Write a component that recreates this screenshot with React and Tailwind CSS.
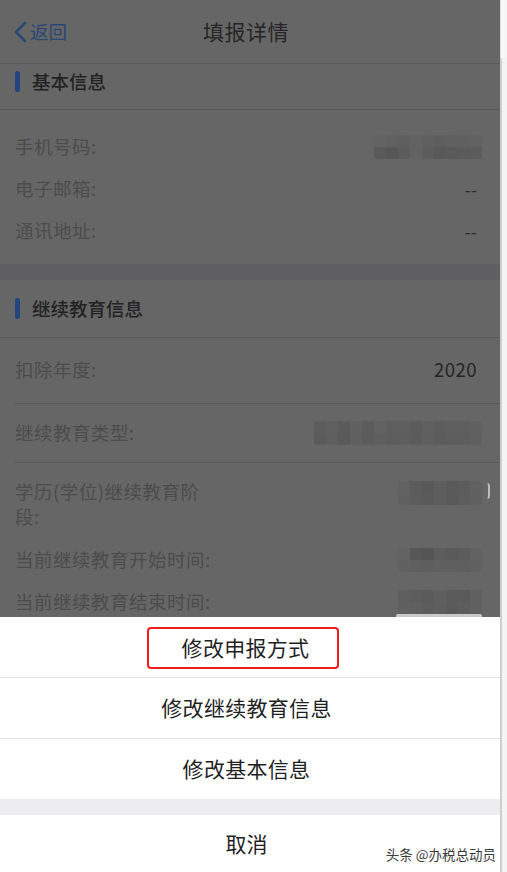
import React from "react";

const FONT = { fontFamily: '"Noto Sans CJK SC", "Noto Sans", sans-serif' };

function Blur({ w, h, cols, rows, tones }) {
  const cells = [];
  for (let r = 0; r < rows; r++) {
    for (let c = 0; c < cols; c++) {
      cells.push(
        <div key={r + "-" + c} style={{ background: tones[(r * cols + c) % tones.length] }} />
      );
    }
  }
  return (
    <div
      className="grid rounded-[3px] overflow-hidden"
      style={{ width: w, height: h, gridTemplateColumns: `repeat(${cols}, 1fr)`, gridTemplateRows: `repeat(${rows}, 1fr)` }}
    >
      {cells}
    </div>
  );
}

function Row({ label, children, className = "", inset = true }) {
  return (
    <div className={"shrink-0 flex items-center justify-between pr-[23px] " + (inset ? "pl-[15px] " : "") + className}>
      <span className="text-[18.5px] text-[#4c4c4c] tracking-[0.5px]">{label}</span>
      {children}
    </div>
  );
}

function SectionHeader({ title, className = "" }) {
  return (
    <div className={"shrink-0 flex items-center gap-[12px] pl-[15px] border-b border-[#5a5a5a] " + className}>
      <div className="w-[5px] h-[21px] rounded-full bg-[#22467e]" />
      <span className="text-[18.5px] font-medium text-[#232323]">{title}</span>
    </div>
  );
}

export default function App() {
  return (
    <div className="flex w-[507px] h-[872px] overflow-hidden" style={FONT}>
      <div className="w-[500px] flex flex-col">
        {/* dimmed page */}
        <div className="h-[617px] shrink-0 overflow-hidden bg-[#666666] flex flex-col">
          {/* nav */}
          <div className="relative h-[64px] flex items-center border-b border-[#5b5b5b] shrink-0">
            <div className="flex items-center pl-[13px] gap-[2px] text-[#284775]">
              <svg width="15" height="22" viewBox="0 0 15 22" fill="none">
                <path d="M12 2 L3 11 L12 20" stroke="#284775" strokeWidth="2.6" strokeLinecap="round" strokeLinejoin="round" />
              </svg>
              <span className="text-[18.5px]">返回</span>
            </div>
            <div className="absolute left-0 right-0 top-0 h-full flex items-center justify-center pointer-events-none">
              <span className="text-[21px] text-[#262626] tracking-[0.5px] -ml-[8px]">填报详情</span>
            </div>
          </div>
          <SectionHeader title="基本信息" className="h-[46px] pb-[10px]" />
          <div className="shrink-0 pt-[16px] pb-[12px] flex flex-col">
            <Row label="手机号码:" className="h-[42px]">
              <div className="-mr-[5px]">
                <Blur w={108} h={24} cols={9} rows={2}
                  tones={["#636363", "#616161", "#5f5f5f", "#626262", "#606060", "#5e5e5e", "#616161", "#606060", "#626262", "#5a5a5a", "#575757", "#5c5c5c", "#626262", "#5d5d5d", "#595959", "#5a5a5a", "#5b5b5b", "#5c5c5c"]} />
              </div>
            </Row>
            <Row label="电子邮箱:" className="h-[42px]">
              <span className="text-[18px] text-[#2d2d2d]">--</span>
            </Row>
            <Row label="通讯地址:" className="h-[42px]">
              <span className="text-[18px] text-[#2d2d2d]">--</span>
            </Row>
          </div>
          <div className="shrink-0 h-[16px] bg-[#5f5f61]" />
          <SectionHeader title="继续教育信息" className="h-[58px]" />
          <div className="shrink-0 ml-[15px] border-b border-[#5a5a5a]">
            <Row label="扣除年度:" inset={false} className="h-[65px] pb-[2px]">
              <span className="text-[18.5px] text-[#262626] tracking-[0.5px]">2020</span>
            </Row>
          </div>
          <div className="shrink-0 ml-[15px] border-b border-[#5a5a5a]">
            <Row label="继续教育类型:" inset={false} className="h-[58px]">
              <div className="-mr-[5px]">
                <Blur w={168} h={24} cols={14} rows={2}
                  tones={["#5d5d5d", "#606060", "#5b5b5b", "#616161", "#5c5c5c", "#626262", "#5e5e5e", "#5f5f5f", "#5c5c5c", "#606060", "#5d5d5d", "#5f5f5f", "#5e5e5e", "#616161", "#5b5b5b", "#5e5e5e", "#5a5a5a", "#606060", "#5c5c5c", "#5f5f5f", "#5d5d5d", "#5e5e5e", "#5b5b5b", "#5f5f5f", "#5c5c5c", "#5d5d5d", "#5e5e5e", "#606060"]} />
              </div>
            </Row>
          </div>
          <div className="shrink-0 flex flex-col">
            <div className="relative shrink-0 flex justify-between pl-[15px] pr-[23px] pt-[16px] h-[76px]">
              <div className="text-[18.5px] text-[#4c4c4c] leading-[25px] tracking-[0.5px]">
                学历(学位)继续教育阶
                <br />
                段:
              </div>
              <div className="-mr-[5px] mt-[2px]">
                <Blur w={84} h={24} cols={7} rows={2}
                  tones={["#626262", "#5c5c5c", "#595959", "#5e5e5e", "#5a5a5a", "#5c5c5c", "#616161", "#606060", "#5d5d5d", "#5a5a5a", "#5e5e5e", "#595959", "#5d5d5d", "#606060"]} />
              </div>
              <div className="absolute right-[10px] top-[20px] w-[3px] h-[16px] rounded-r-full border-r-2 border-[#bdbdbd]" />
            </div>
            <Row label="当前继续教育开始时间:" className="h-[42px]">
              <div className="-mr-[5px]">
                <Blur w={84} h={24} cols={7} rows={2}
                  tones={["#636363", "#575757", "#555555", "#5d5d5d", "#5a5a5a", "#5c5c5c", "#626262", "#616161", "#5f5f5f", "#5e5e5e", "#606060", "#5f5f5f", "#5e5e5e", "#616161"]} />
              </div>
            </Row>
            <div className="relative shrink-0">
              <Row label="当前继续教育结束时间:" className="h-[42px]">
                <div className="-mr-[5px]">
                  <Blur w={84} h={24} cols={7} rows={2}
                    tones={["#5f5f5f", "#5d5d5d", "#5b5b5b", "#5f5f5f", "#5b5b5b", "#5a5a5a", "#606060", "#606060", "#5f5f5f", "#5c5c5c", "#5e5e5e", "#5a5a5a", "#5d5d5d", "#606060"]} />
                </div>
              </Row>
              <div className="absolute right-[18px] bottom-[5px] w-[86px] h-[4px] rounded-full bg-[#c9c9c9]" />
            </div>
          </div>
        </div>

        {/* action sheet */}
        <div className="flex-1 bg-white flex flex-col">
          <div className="h-[61px] pr-[7px] flex items-center justify-center border-b border-[#e3e3e3]">
            <div className="w-[192px] h-[42px] mr-[7px] pl-[5px] border-[2.5px] border-[#f21c1c] rounded-[4px] flex items-center justify-center mt-[1px]">
              <span className="text-[21px] text-[#1f1f1f] tracking-[0.3px]">修改申报方式</span>
            </div>
          </div>
          <div className="h-[61px] pr-[7px] flex items-center justify-center border-b border-[#e3e3e3]">
            <span className="text-[21px] text-[#1f1f1f] tracking-[0.3px]">修改继续教育信息</span>
          </div>
          <div className="h-[60px] pr-[7px] flex items-center justify-center">
            <span className="text-[21px] text-[#1f1f1f] tracking-[0.3px]">修改基本信息</span>
          </div>
          <div className="h-[16px] bg-[#ececf1]" />
          <div className="relative flex-1 pr-[7px] flex items-center justify-center">
            <span className="text-[21px] text-[#1f1f1f]">取消</span>
            <span className="absolute right-[4px] bottom-[8px] text-[13.5px] text-[#3a3a3a]">头条 @办税总动员</span>
          </div>
        </div>
      </div>
      {/* right strip */}
      <div className="w-[7px] flex flex-col bg-[#f3f3f3]">
        <div className="h-[58px] bg-[#f7f7f7] border-l border-[#e0e0e0]" />
        <div className="flex-1 border-l-2 border-[#cfcfcf]" />
      </div>
    </div>
  );
}
